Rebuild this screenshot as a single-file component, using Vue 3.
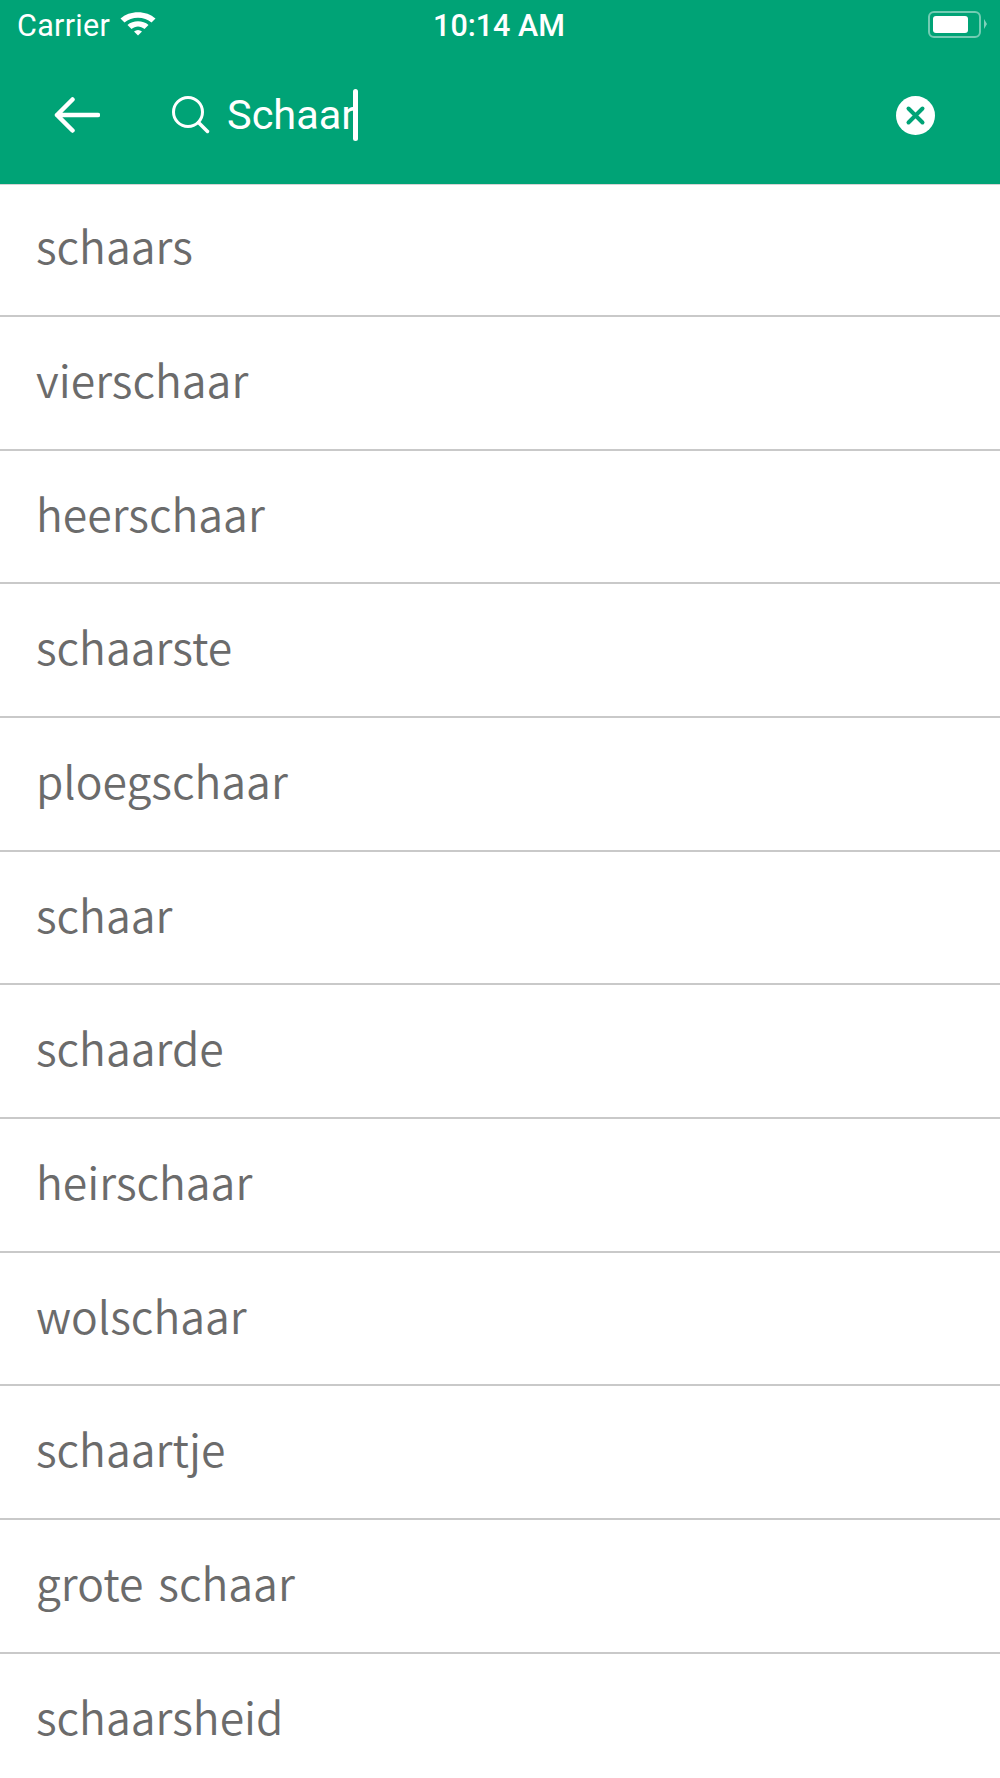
<script setup>
const words = ['schaars','vierschaar','heerschaar','schaarste','ploegschaar','schaar','schaarde','heirschaar','wolschaar','schaartje','grote schaar','schaarsheid']
</script>

<template>
  <div class="page">
    <header class="top">
      <div class="status">
        <div class="left">
          <span class="carrier">Carrier</span>
          <svg class="wifi" width="38" height="28" viewBox="0 0 38 28">
            <path d="M1.500 9.500C10.500 1 27.500 1 36.500 9.500L32.500 13.500C25.500 7 12.500 7 5.500 13.500Z" fill="#fff"/>
            <path d="M8.500 16C14 11 24 11 29.500 16L25.500 20C21.500 16.500 16.500 16.500 12.500 20Z" fill="#fff"/>
            <path d="M15 22.500C17.500 20.500 20.500 20.500 23 22.500L19 26.500Z" fill="#fff"/>
          </svg>
        </div>
        <span class="time">10:14 AM</span>
        <div class="battery">
          <div class="shell"><div class="fill"></div></div>
          <div class="nub"></div>
        </div>
      </div>
      <div class="bar">
        <svg class="back" width="46" height="38" viewBox="0 0 46 38">
          <path d="M3 19H44M18.500 3.500L3 19L18.500 34.500" fill="none" stroke="#fff" stroke-width="4.500" stroke-linecap="round" stroke-linejoin="round"/>
        </svg>
        <svg class="search" width="40" height="40" viewBox="0 0 40 40">
          <circle cx="17" cy="17" r="14.500" fill="none" stroke="#fff" stroke-width="3"/>
          <path d="M27.500 27.500L36.500 36.500" stroke="#fff" stroke-width="3.500" stroke-linecap="round"/>
        </svg>
        <div class="query"><span>Schaar</span><i class="caret"></i></div>
        <svg class="clear" width="39" height="39" viewBox="0 0 39 39">
          <circle cx="19.500" cy="19.500" r="19.500" fill="#fff"/>
          <path d="M12.500 12.500L26.500 26.500M26.500 12.500L12.500 26.500" stroke="#00a376" stroke-width="4" stroke-linecap="round"/>
        </svg>
      </div>
    </header>
    <ul class="list">
      <li v-for="w in words" :key="w" class="row">{{ w }}</li>
    </ul>
  </div>
</template>

<style scoped>
.page { width: 1000px; height: 1778px; overflow: hidden; background: #fff; font-family: "Noto Sans CJK KR", "Noto Sans", sans-serif; }
.top { height: 184px; background: #00a376; color: #fff; border-bottom: 1px solid #d4d4d4; }
.status { height: 50px; display: flex; align-items: center; justify-content: space-between; position: relative; padding: 0 13px 0 17px; }
.left { display: flex; align-items: center; gap: 9px; }
.carrier { font: 30.5px Roboto, sans-serif; letter-spacing: .3px; }
.wifi { display: block; margin-top: -4px; }
.time { position: absolute; left: 0; right: 0; top: 8px; margin-left: -2px; text-align: center; font: 500 30.5px Roboto, sans-serif; }
.battery { display: flex; align-items: center; gap: 3px; margin-top: -2px; }
.shell { width: 53px; height: 27px; border: 2px solid rgba(255,255,255,.45); border-radius: 6px; padding: 3px; box-sizing: border-box; }
.fill { width: 35px; height: 100%; background: #fff; border-radius: 3px; }
.nub { width: 0; height: 0; border-left: 3px solid rgba(255,255,255,.5); border-top: 5px solid transparent; border-bottom: 5px solid transparent; }
.bar { height: 133px; display: flex; align-items: center; padding: 0 65px 4px 54px; box-sizing: border-box; }
.back { display: block; margin-right: 71px; }
.search { display: block; margin-right: 16px; }
.query { flex: 1; display: flex; align-items: center; font: 400 41.5px Roboto, sans-serif; }
.caret { width: 5px; height: 52px; background: #fff; border-radius: 3px; margin-left: -2px; }
.clear { display: block; margin-top: 2px; }
.list { list-style: none; margin: -1.5px 0 0; padding: 0; }
.row { height: 133.67px; box-sizing: border-box; display: flex; align-items: center; padding: 0 36px 9px; font-size: 44.5px; font-weight: 350; word-spacing: 5px; color: #6b6b6b; border-bottom: 2px solid #c9c9c9; }
</style>
